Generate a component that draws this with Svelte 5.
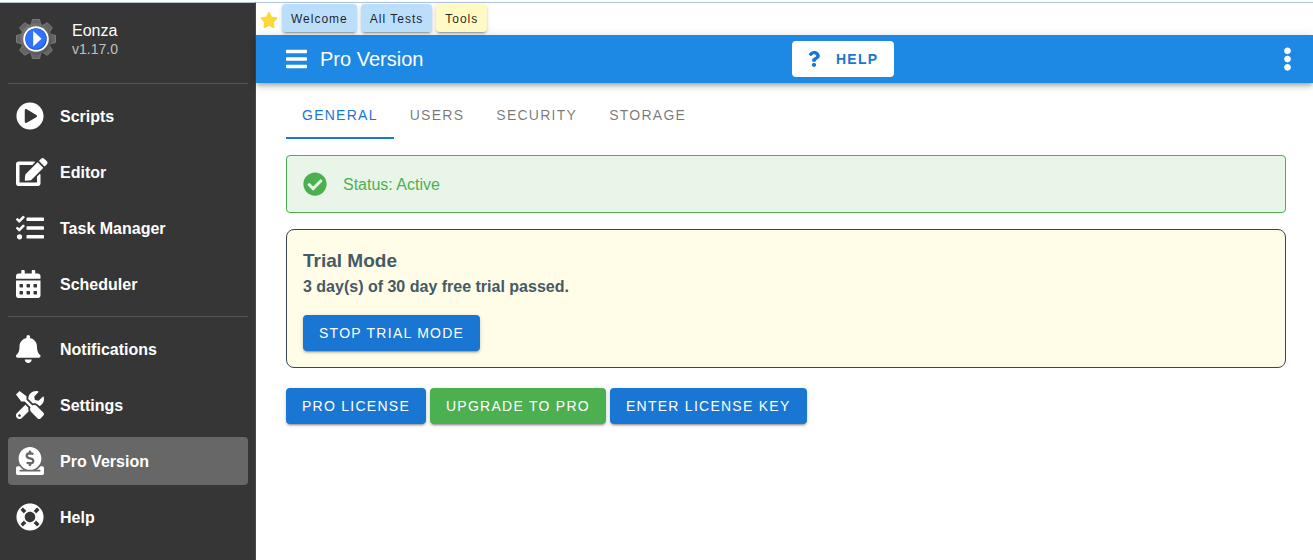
<script>
  const icons = {
    play: [512, 'M256 8C119 8 8 119 8 256s111 248 248 248 248-111 248-248S393 8 256 8zm115.7 272l-176 101c-15.8 8.8-35.7-2.5-35.7-21V152c0-18.4 19.8-29.8 35.7-21l176 107c16.4 9.2 16.4 32.9 0 42z'],
    edit: [576, 'M402.6 83.2l90.2 90.2c3.8 3.8 3.8 10 0 13.8L274.4 405.6l-92.8 10.3c-12.4 1.4-22.9-9.1-21.5-21.5l10.3-92.8L388.8 83.2c3.8-3.8 10-3.8 13.8 0zm162-22.9l-48.8-48.8c-15.2-15.2-39.9-15.2-55.2 0l-35.4 35.4c-3.8 3.8-3.8 10 0 13.8l90.2 90.2c3.8 3.8 10 3.8 13.8 0l35.4-35.4c15.2-15.3 15.2-40 0-55.2zM384 346.2V448H64V128h229.8c3.2 0 6.2-1.3 8.5-3.5l40-40c7.6-7.6 2.2-20.5-8.5-20.5H48C21.5 64 0 85.5 0 112v352c0 26.5 21.5 48 48 48h352c26.5 0 48-21.5 48-48V306.2c0-10.7-12.9-16-20.5-8.5l-40 40c-2.2 2.3-3.5 5.3-3.5 8.5z'],
    tasks: [512, 'M139.61 35.5a12 12 0 0 0-17 0L58.93 98.81l-22.7-22.12a12 12 0 0 0-17 0L3.53 92.41a12 12 0 0 0 0 17l47.59 47.4a12.78 12.78 0 0 0 17.61 0l15.59-15.62L156.52 69a12.09 12.09 0 0 0 .09-17zm0 159.19a12 12 0 0 0-17 0l-63.68 63.72-22.7-22.1a12 12 0 0 0-17 0L3.53 252a12 12 0 0 0 0 17L51 316.5a12.77 12.77 0 0 0 17.6 0l15.7-15.69 72.2-72.22a12 12 0 0 0 .09-16.9zM64 368c-26.49 0-48.59 21.5-48.59 48S37.53 464 64 464a48 48 0 0 0 0-96zm432 16H208a16 16 0 0 0-16 16v32a16 16 0 0 0 16 16h288a16 16 0 0 0 16-16v-32a16 16 0 0 0-16-16zm0-320H208a16 16 0 0 0-16 16v32a16 16 0 0 0 16 16h288a16 16 0 0 0 16-16V80a16 16 0 0 0-16-16zm0 160H208a16 16 0 0 0-16 16v32a16 16 0 0 0 16 16h288a16 16 0 0 0 16-16v-32a16 16 0 0 0-16-16z'],
    calendar: [448, 'M0 464c0 26.5 21.5 48 48 48h352c26.5 0 48-21.5 48-48V192H0v272zm320-196c0-6.6 5.4-12 12-12h40c6.6 0 12 5.4 12 12v40c0 6.6-5.4 12-12 12h-40c-6.6 0-12-5.4-12-12v-40zm0 128c0-6.6 5.4-12 12-12h40c6.6 0 12 5.4 12 12v40c0 6.6-5.4 12-12 12h-40c-6.6 0-12-5.4-12-12v-40zM192 268c0-6.6 5.4-12 12-12h40c6.6 0 12 5.4 12 12v40c0 6.6-5.4 12-12 12h-40c-6.6 0-12-5.4-12-12v-40zm0 128c0-6.6 5.4-12 12-12h40c6.6 0 12 5.4 12 12v40c0 6.6-5.4 12-12 12h-40c-6.6 0-12-5.4-12-12v-40zM64 268c0-6.6 5.4-12 12-12h40c6.6 0 12 5.4 12 12v40c0 6.6-5.4 12-12 12H76c-6.6 0-12-5.4-12-12v-40zm0 128c0-6.6 5.4-12 12-12h40c6.6 0 12 5.4 12 12v40c0 6.6-5.4 12-12 12H76c-6.6 0-12-5.4-12-12v-40zM400 64h-48V16c0-8.8-7.2-16-16-16h-32c-8.8 0-16 7.2-16 16v48H160V16c0-8.8-7.2-16-16-16h-32c-8.8 0-16 7.2-16 16v48H48C21.5 64 0 85.5 0 112v48h448v-48c0-26.5-21.5-48-48-48z'],
    bell: [448, 'M224 512c35.32 0 63.97-28.65 63.97-64H160.03c0 35.35 28.65 64 63.97 64zm215.39-149.71c-19.32-20.76-55.47-51.99-55.47-154.29 0-77.7-54.48-139.9-127.94-155.16V32c0-17.67-14.32-32-31.98-32s-31.98 14.33-31.98 32v20.84C118.56 68.1 64.08 130.3 64.08 208c0 102.3-36.15 133.53-55.47 154.29-6 6.45-8.66 14.16-8.61 21.71.11 16.4 12.98 32 32.1 32h383.8c19.12 0 32-15.6 32.1-32 .05-7.55-2.61-15.27-8.61-21.71z'],
    tools: [512, 'M501.1 395.7L384 278.6c-23.1-23.1-57.6-27.6-85.4-13.9L192 158.1V96L64 0 0 64l96 128h62.1l106.6 106.6c-13.6 27.8-9.2 62.3 13.9 85.4l117.1 117.1c14.6 14.6 38.2 14.6 52.7 0l52.7-52.7c14.5-14.6 14.5-38.2 0-52.7zM331.7 225c28.3 0 54.9 11 74.9 31l19.4 19.4c15.8-6.9 30.8-16.5 43.8-29.5 37.1-37.1 49.7-89.3 37.9-136.7-2.2-9-13.5-12.1-20.1-5.5l-74.4 74.4-67.9-11.3L334 98.9l74.4-74.4c6.6-6.6 3.4-17.9-5.7-20.2-47.4-11.7-99.6.9-136.6 37.9-28.5 28.5-41.9 66.1-41.2 103.6l82.1 82.1c8.1-1.9 16.5-2.9 24.7-2.9zm-103.9 82l-56.7-56.7L18.7 402.8c-25 25-25 65.5 0 90.5s65.5 25 90.5 0l123.6-123.6c-7.6-19.9-9.9-41.6-5-62.7zM64 472c-13.2 0-24-10.8-24-24 0-13.3 10.7-24 24-24s24 10.7 24 24c0 13.2-10.7 24-24 24z'],
    donate: [512, 'M256 416c114.9 0 208-93.1 208-208S370.9 0 256 0 48 93.1 48 208s93.1 208 208 208zM233.8 97.4V80.6c0-9.2 7.4-16.6 16.6-16.6h11.1c9.2 0 16.6 7.4 16.6 16.6v17c15.5.8 30.5 6.1 43 15.4 5.6 4.1 6.2 12.3 1.2 17.1L306 145.6c-3.8 3.7-9.5 3.8-14 1-5.4-3.4-11.4-5.1-17.8-5.1h-38.9c-9 0-16.3 8.2-16.3 18.3 0 8.2 5 15.5 12.1 17.6l62.3 18.7c25.7 7.7 43.7 32.4 43.7 60.1 0 34-26.4 61.5-59.1 62.4v16.8c0 9.2-7.4 16.6-16.6 16.6h-11.1c-9.2 0-16.6-7.4-16.6-16.6v-17c-15.5-.8-30.5-6.1-43-15.4-5.6-4.1-6.2-12.3-1.2-17.1l16.3-15.5c3.8-3.7 9.5-3.8 14-1 5.4 3.4 11.4 5.1 17.8 5.1h38.9c9 0 16.3-8.2 16.3-18.3 0-8.2-5-15.5-12.1-17.6l-62.3-18.7c-25.7-7.7-43.7-32.4-43.7-60.1.1-34 26.4-61.5 59.1-62.4zM480 352h-32.5c-19.6 26-44.6 47.7-73 64h63.8c5.3 0 9.6 3.6 9.6 8v16c0 4.4-4.3 8-9.6 8H73.6c-5.3 0-9.6-3.6-9.6-8v-16c0-4.4 4.3-8 9.6-8h63.8c-28.4-16.3-53.3-38-73-64H32c-17.7 0-32 14.3-32 32v96c0 17.7 14.3 32 32 32h448c17.7 0 32-14.3 32-32v-96c0-17.7-14.3-32-32-32z'],
    ring: [512, 'M256 8C119.033 8 8 119.033 8 256s111.033 248 248 248 248-111.033 248-248S392.967 8 256 8zm173.696 119.559l-63.399 63.399c-10.987-18.559-26.67-34.252-45.255-45.255l63.399-63.399a218.396 218.396 0 0 1 45.255 45.255zM256 352c-53.019 0-96-42.981-96-96s42.981-96 96-96 96 42.981 96 96-42.981 96-96 96zM127.559 82.304l63.399 63.399c-18.559 10.987-34.252 26.67-45.255 45.255l-63.399-63.399a218.372 218.372 0 0 1 45.255-45.255zM82.304 384.441l63.399-63.399c10.987 18.559 26.67 34.252 45.255 45.255l-63.399 63.399a218.396 218.396 0 0 1-45.255-45.255zm302.137 45.255l-63.399-63.399c18.559-10.987 34.252-26.67 45.255-45.255l63.399 63.399a218.403 218.403 0 0 1-45.255 45.255z'],
    check: [512, 'M504 256c0 136.967-111.033 248-248 248S8 392.967 8 256 119.033 8 256 8s248 111.033 248 248zM227.314 387.314l184-184c6.248-6.248 6.248-16.379 0-22.627l-22.627-22.627c-6.248-6.249-16.379-6.249-22.628 0L216 308.118l-70.059-70.059c-6.248-6.248-16.379-6.248-22.628 0l-22.627 22.627c-6.248 6.248-6.248 16.379 0 22.627l104 104c6.249 6.249 16.379 6.249 22.628.001z'],
    star: [576, 'M259.3 17.8L194 150.2 47.9 171.5c-26.2 3.8-36.7 36.1-17.7 54.6l105.7 103-25 145.5c-4.5 26.3 23.2 46 46.4 33.7L288 439.6l130.7 68.7c23.2 12.2 50.9-7.4 46.4-33.7l-25-145.5 105.7-103c19-18.5 8.5-50.8-17.7-54.6L382 150.2 316.7 17.8c-11.7-23.6-45.6-23.9-57.4 0z'],
    bars: [448, 'M16 132h416c8.837 0 16-7.163 16-16V76c0-8.837-7.163-16-16-16H16C7.163 60 0 67.163 0 76v40c0 8.837 7.163 16 16 16zm0 160h416c8.837 0 16-7.163 16-16v-40c0-8.837-7.163-16-16-16H16c-8.837 0-16 7.163-16 16v40c0 8.837 7.163 16 16 16zm0 160h416c8.837 0 16-7.163 16-16v-40c0-8.837-7.163-16-16-16H16c-8.837 0-16 7.163-16 16v40c0 8.837 7.163 16 16 16z'],
    dots: [192, 'M96 184c39.8 0 72 32.2 72 72s-32.2 72-72 72-72-32.2-72-72 32.2-72 72-72zM24 80c0 39.8 32.2 72 72 72s72-32.2 72-72S135.8 8 96 8 24 40.2 24 80zm0 352c0 39.8 32.2 72 72 72s72-32.2 72-72-32.2-72-72-72-72 32.2-72 72z'],
    question: [384, 'M202.021 0C122.202 0 70.503 32.703 29.914 91.026c-7.363 10.58-5.093 25.086 5.178 32.874l43.138 32.709c10.373 7.865 25.132 6.026 33.253-4.148 25.049-31.381 43.63-49.449 82.757-49.449 30.764 0 68.816 19.799 68.816 49.631 0 22.552-18.617 34.134-48.993 51.164-35.423 19.86-82.299 44.576-82.299 106.405V320c0 13.255 10.745 24 24 24h72.471c13.255 0 24-10.745 24-24v-5.773c0-42.86 125.268-44.645 125.268-160.627C377.504 66.256 286.902 0 202.021 0zM192 373.459c-38.196 0-69.271 31.075-69.271 69.271 0 38.195 31.075 69.27 69.271 69.27s69.271-31.075 69.271-69.271-31.075-69.27-69.271-69.27z'],
  };

  const navGroups = [
    [
      ['Scripts', 'play'],
      ['Editor', 'edit'],
      ['Task Manager', 'tasks'],
      ['Scheduler', 'calendar'],
    ],
    [
      ['Notifications', 'bell'],
      ['Settings', 'tools'],
      ['Pro Version', 'donate'],
      ['Help', 'ring'],
    ],
  ];
  const tabs = ['General', 'Users', 'Security', 'Storage'];
  const teeth = [0, 45, 90, 135, 180, 225, 270, 315];

  let page = $state('Pro Version');
  let tab = $state('General');
</script>

{#snippet icon(name, size)}
  <svg class="icon" height={size} width={(size * icons[name][0]) / 512} viewBox="0 0 {icons[name][0]} 512" aria-hidden="true">
    <path d={icons[name][1]} />
  </svg>
{/snippet}

<div class="app">
  <aside>
    <div class="brand">
      <svg width="40" height="40" viewBox="0 0 40 40" aria-hidden="true">
        <defs>
          <linearGradient id="steel" x1="0" y1="0" x2="1" y2="1">
            <stop offset="0" stop-color="#7c7c7c" />
            <stop offset="1" stop-color="#505050" />
          </linearGradient>
        </defs>
        {#each teeth as angle}
          <path d="M15 7L16.400 .5h7.200L25 7z" fill="#646464" stroke="#8c8c8c" stroke-width=".7" transform="rotate({angle} 20 20)" />
        {/each}
        <circle cx="20" cy="20" r="15.800" fill="url(#steel)" />
        <circle cx="20" cy="20" r="12.800" fill="#fff" />
        <circle cx="20" cy="20" r="10.800" fill="#1a4fc4" />
        <circle cx="19.700" cy="19.700" r="10.200" fill="#2e74ff" />
        <path d="M17.200 12v15.500l8.300-7.700z" fill="#fff" />
      </svg>
      <div>
        <div class="name">Eonza</div>
        <div class="version">v1.17.0</div>
      </div>
    </div>
    <nav>
      {#each navGroups as group}
        <ul>
          {#each group as [label, glyph]}
            <li>
              <a href="#{glyph}" class:active={page === label} onclick={() => (page = label)}>
                <span class="glyph">{@render icon(glyph, 28)}</span>
                <span class="label">{label}</span>
              </a>
            </li>
          {/each}
        </ul>
      {/each}
    </nav>
  </aside>

  <div class="page">
    <div class="favorites">
      <span class="star">{@render icon('star', 16)}</span>
      <button class="fav">Welcome</button>
      <button class="fav">All Tests</button>
      <button class="fav yellow">Tools</button>
    </div>
    <header>
      <button class="bare" aria-label="Menu">{@render icon('bars', 24)}</button>
      <h1>{page}</h1>
      <span class="spacer"></span>
      <button class="help">{@render icon('question', 16)}<span>Help</span></button>
      <span class="spacer"></span>
      <button class="bare more" aria-label="More">{@render icon('dots', 24)}</button>
    </header>
    <main>
      <div class="tabs" role="tablist">
        {#each tabs as t}
          <button role="tab" aria-selected={tab === t} class:current={tab === t} onclick={() => (tab = t)}>{t}</button>
        {/each}
      </div>
      <div class="status">{@render icon('check', 24)}<span class="label">Status: Active</span></div>
      <section class="trial">
        <h2>Trial Mode</h2>
        <p>3 day(s) of 30 day free trial passed.</p>
        <button class="btn">Stop trial mode</button>
      </section>
      <div class="actions">
        <button class="btn">Pro license</button>
        <button class="btn green">Upgrade to Pro</button>
        <button class="btn">Enter license key</button>
      </div>
    </main>
  </div>
</div>

<style>
  :global(body) {
    margin: 0;
    background: #fff;
  }
  .app {
    box-sizing: border-box;
    display: flex;
    min-height: 100vh;
    padding-top: 2px;
    font: 16px/24px "Liberation Sans", Arial, sans-serif;
    color: rgba(0, 0, 0, 0.87);
  }
  .app :global(*) {
    box-sizing: border-box;
  }
  .icon {
    display: block;
    flex: none;
    fill: currentColor;
  }
  button {
    font: inherit;
    color: inherit;
    border: 0;
    margin: 0;
    background: none;
    cursor: pointer;
  }
  aside {
    flex: none;
    width: 256px;
    background: #363636;
    border-top: 1px solid #b0c4de;
    border-right: 1px solid #4a4a4a;
    color: #fff;
  }
  .brand {
    display: flex;
    align-items: center;
    gap: 16px;
    height: 72px;
    padding: 0 16px;
    margin-bottom: 8px;
  }
  .name {
    line-height: 19px;
  }
  .version {
    font-size: 14px;
    line-height: 18px;
    color: rgba(255, 255, 255, 0.7);
  }
  ul {
    list-style: none;
    margin: 0 7px 0 8px;
    padding: 8px 0;
    border-top: 1px solid #545454;
    display: flex;
    flex-direction: column;
    gap: 8px;
  }
  nav a {
    display: flex;
    align-items: center;
    height: 48px;
    padding: 0 8px;
    border-radius: 4px;
    color: #fff;
    font-weight: bold;
    text-decoration: none;
  }
  nav a.active {
    background: #676767;
  }
  .glyph {
    width: 44px;
  }
  .label {
    padding-top: 2px;
    line-height: 22px;
  }
  .page {
    flex: 1;
    min-width: 0;
    border-top: 1px solid #b0c4de;
  }
  .favorites {
    display: flex;
    align-items: center;
    gap: 4px;
    height: 32px;
    padding: 0 4px 2px;
  }
  .star {
    padding-top: 4px;
    color: #fdd835;
  }
  .fav {
    height: 28px;
    padding: 1px 9px 0;
    border-radius: 4px;
    background: #bbdefb;
    font-size: 12px;
    letter-spacing: 1px;
    box-shadow: 0 3px 1px -2px rgba(0, 0, 0, 0.2), 0 2px 2px rgba(0, 0, 0, 0.14), 0 1px 5px rgba(0, 0, 0, 0.12);
  }
  .yellow {
    background: #fff9c4;
  }
  header {
    display: flex;
    align-items: center;
    height: 48px;
    padding: 0 2px 0 30px;
    background: #1e88e5;
    color: #fff;
    box-shadow: 0 2px 4px -1px rgba(0, 0, 0, 0.2), 0 4px 5px rgba(0, 0, 0, 0.14), 0 1px 10px rgba(0, 0, 0, 0.12);
  }
  .bare {
    padding: 0;
  }
  .more {
    display: flex;
    justify-content: center;
    width: 48px;
  }
  h1 {
    margin: 0 0 0 13px;
    font-size: 20px;
    font-weight: normal;
  }
  .spacer {
    flex: 1;
  }
  .help {
    display: flex;
    align-items: center;
    gap: 16px;
    height: 36px;
    padding: 0 16px;
    border-radius: 4px;
    background: #fff;
    color: #1976d2;
    font-size: 14px;
    font-weight: bold;
    letter-spacing: 0.09em;
    text-transform: uppercase;
  }
  main {
    padding: 8px 27px 16px 30px;
  }
  .tabs {
    display: flex;
    height: 48px;
    margin-bottom: 16px;
  }
  .tabs button {
    padding: 0 16px;
    color: rgba(0, 0, 0, 0.54);
    font-size: 14px;
    letter-spacing: 0.09em;
    text-transform: uppercase;
  }
  .tabs .current {
    color: #1976d2;
    box-shadow: inset 0 -2px #1976d2;
  }
  .status {
    display: flex;
    align-items: center;
    gap: 16px;
    min-height: 58px;
    padding: 16px;
    border: 1px solid #4caf50;
    border-radius: 4px;
    background: #eaf5ea;
    color: #4caf50;
  }
  .trial {
    margin: 16px 0 20px;
    padding: 17px 16px 16px;
    border: 1px solid #37474f;
    border-radius: 8px;
    background: #fffde7;
    color: #455a64;
  }
  h2 {
    margin: 0;
    font-size: 19px;
    line-height: 28px;
  }
  p {
    margin: 0 0 16px;
    font-weight: bold;
  }
  .btn {
    height: 36px;
    padding: 0 16px;
    border-radius: 4px;
    background: #1976d2;
    color: #fff;
    font-size: 14px;
    letter-spacing: 0.09em;
    text-transform: uppercase;
    box-shadow: 0 3px 1px -2px rgba(0, 0, 0, 0.2), 0 2px 2px rgba(0, 0, 0, 0.14), 0 1px 5px rgba(0, 0, 0, 0.12);
  }
  .trial .btn {
    display: block;
  }
  .green {
    background: #4caf50;
  }
  .actions {
    display: flex;
    flex-wrap: wrap;
    gap: 4px;
  }
</style>
